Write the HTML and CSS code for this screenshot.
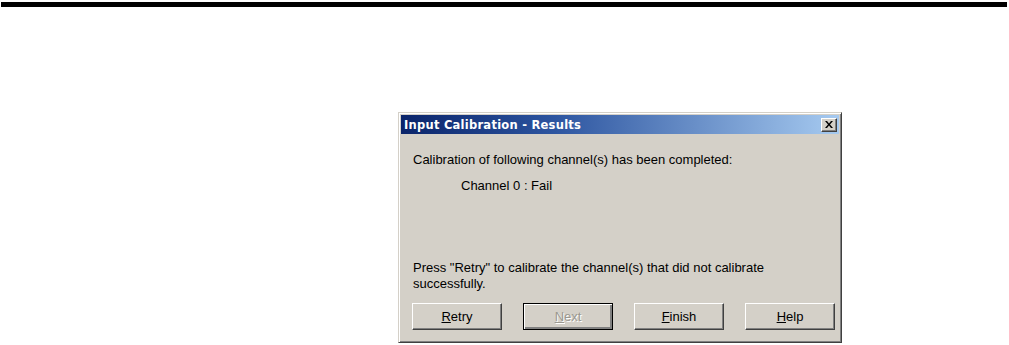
FILE: index.html
```html
<!DOCTYPE html>
<html lang="en">
<head>
  <meta charset="UTF-8">
  <title>Input Calibration - Results</title>
  <link rel="stylesheet" href="styles.css">
</head>
<body>
  <div class="rule"></div>
  <div class="dialog">
    <div class="titlebar">
      <span class="title">Input Calibration - Results</span>
      <button class="close" type="button" aria-label="Close">
        <svg width="8" height="7" viewBox="0 0 8 7"><path d="M0 0h2l2 2.5L6 0h2L5 3.5 8 7H6L4 4.5 2 7H0l3-3.5z" fill="#000"/></svg>
      </button>
    </div>
    <div class="content">
      <p class="msg">Calibration of following channel(s) has been completed:</p>
      <p class="msg channel">Channel 0 : Fail</p>
      <p class="msg prompt">Press "Retry" to calibrate the channel(s) that did not calibrate<br>successfully.</p>
      <div class="buttons">
        <button class="btn" type="button"><u>R</u>etry</button>
        <button class="btn btn-default" type="button" disabled><u>N</u>ext</button>
        <button class="btn" type="button"><u>F</u>inish</button>
        <button class="btn" type="button"><u>H</u>elp</button>
      </div>
    </div>
  </div>
</body>
</html>
```

FILE: styles.css
```css
body {
  margin: 0;
  background-color: #fff;
  font-family: "Liberation Sans", Arial, sans-serif;
}
.rule {
  height: 5px;
  margin: 2px 2px 0 1px;
  background-color: #000;
}
.dialog {
  width: 438px;
  height: 225px;
  margin: 105px 0 0 398px;
  padding: 2px;
  background-color: #d4d0c8;
  border: 1px solid;
  border-color: #d4d0c8 #404040 #404040 #d4d0c8;
  box-shadow: inset 1px 1px 0 #fff, inset -1px -1px 0 #808080;
  display: flex;
  flex-direction: column;
}
.titlebar {
  height: 19px;
  padding: 0 2px 0 3px;
  background: linear-gradient(to right, #0a246a, #2d55a0 35%, #a6caf0);
  display: flex;
  align-items: center;
  justify-content: space-between;
}
.title {
  color: #fff;
  font-family: "DejaVu Sans", Verdana, sans-serif;
  font-weight: bold;
  font-size: 11.5px;
  letter-spacing: 0.25px;
}
.close {
  width: 16px;
  height: 14px;
  padding: 0;
  background-color: #d4d0c8;
  border: 1px solid;
  border-color: #fff #404040 #404040 #fff;
  box-shadow: inset -1px -1px 0 #808080;
  display: flex;
  align-items: center;
  justify-content: center;
}
.content {
  flex: 1;
  padding: 18px 0 0 12px;
}
.msg {
  margin: 0;
  font-size: 13px;
  line-height: 16px;
  color: #000;
}
.channel {
  margin: 10px 0 0 48px;
}
.prompt {
  margin-top: 66px;
}
.buttons {
  margin: 11px 0 0 -1px;
  display: flex;
  gap: 21px;
}
.btn {
  width: 90px;
  height: 27px;
  padding: 0;
  font-family: "Liberation Sans", Arial, sans-serif;
  font-size: 13px;
  color: #000;
  background-color: #d4d0c8;
  border: 1px solid;
  border-color: #fff #404040 #404040 #fff;
  box-shadow: inset -1px -1px 0 #808080;
}
.btn u {
  text-decoration-thickness: 1px;
}
.btn-default {
  border: 1px solid #000;
  box-shadow: inset 1px 1px 0 #fff, inset -2px -2px 0 #808080;
}
.btn:disabled {
  color: #9a9890;
  text-shadow: 1px 1px 0 #fff;
}
```
